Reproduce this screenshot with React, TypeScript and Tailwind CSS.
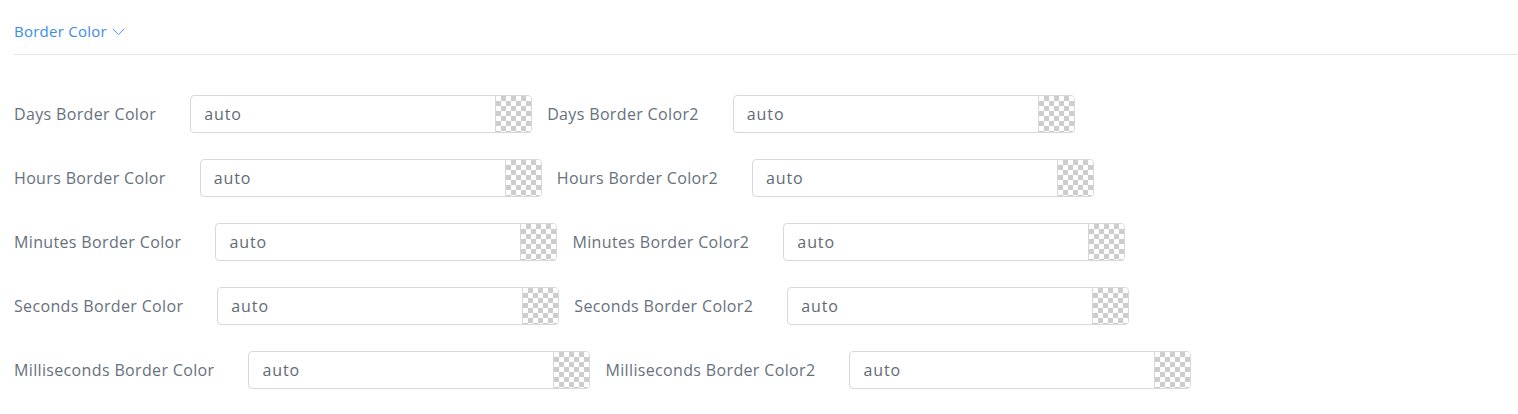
import React from "react";

const rows = ["Days", "Hours", "Minutes", "Seconds", "Milliseconds"];

function ColorInput() {
  return (
    <div className="flex h-[38px] w-[342px] shrink-0 rounded-[4px] border border-[#d6d9dc] bg-white">
      <div className="flex flex-1 items-center pl-[13px] text-[16px] tracking-[0.9px] text-[#5f6a75]">auto</div>
      <div className="h-full w-[36px] rounded-r-[3px] border-l border-[#d6d9dc] bg-[conic-gradient(#cdcdcd_25%,#ffffff_0_50%,#cdcdcd_0_75%,#ffffff_0)] bg-[length:10px_10px]" />
    </div>
  );
}

export default function App() {
  return (
    <div className="min-h-[414px] bg-white pl-[14px] font-['Open_Sans',sans-serif]">
      <div className="flex items-center gap-[4px] border-b border-[#e6e6e6] pt-[21px] pb-[13px] text-[15px] leading-[20px] tracking-[0.25px] text-[#3a8ee6]">
        <span>Border Color</span>
        <svg width="15" height="15" viewBox="0 0 24 24" fill="none" stroke="currentColor" strokeWidth="1.5" strokeLinecap="round" strokeLinejoin="round">
          <path d="M3 8l9 9 9-9" />
        </svg>
      </div>
      <div className="mt-[40px] flex flex-col gap-[26px]">
        {rows.map((r) => (
          <div key={r} className="flex h-[38px] items-center text-[16px] tracking-[0.35px] text-[#66717c]">
            <span className="mr-[34px] whitespace-nowrap">{r} Border Color</span>
            <ColorInput />
            <span className="ml-[15px] mr-[34px] whitespace-nowrap">{r} Border Color2</span>
            <ColorInput />
          </div>
        ))}
      </div>
    </div>
  );
}
